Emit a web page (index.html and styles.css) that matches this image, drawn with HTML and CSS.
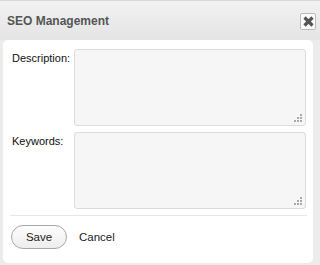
FILE: index.html
```html
<!DOCTYPE html>
<html lang="en">
<head>
  <meta charset="UTF-8">
  <title>SEO Management</title>
  <link rel="stylesheet" href="styles.css">
</head>
<body>
  <div class="dialog">
    <div class="dialog-header">
      <h2>SEO Management</h2>
      <button class="close" title="Close">
        <svg width="11" height="11" viewBox="0 0 11 11">
          <path d="M1.5 1.5 L9.5 9.5 M9.5 1.5 L1.5 9.5" stroke="#555" stroke-width="3.2"/>
        </svg>
      </button>
    </div>
    <div class="dialog-body">
      <div class="field">
        <label for="desc">Description:</label>
        <div class="input-wrap">
          <textarea id="desc"></textarea>
          <span class="grip"></span>
        </div>
      </div>
      <div class="field">
        <label for="keys">Keywords:</label>
        <div class="input-wrap">
          <textarea id="keys"></textarea>
          <span class="grip"></span>
        </div>
      </div>
      <div class="actions">
        <button class="save">Save</button>
        <a href="#" class="cancel">Cancel</a>
      </div>
    </div>
  </div>
</body>
</html>
```

FILE: styles.css
```css
body {
  margin: 0;
  background: #ececec;
  font-family: "Liberation Sans", Arial, sans-serif;
  font-size: 12px;
  color: #222;
}

.dialog {
  width: 320px;
  height: 265px;
  display: flex;
  flex-direction: column;
}

.dialog-header {
  height: 40px;
  display: flex;
  align-items: center;
  justify-content: space-between;
  padding: 0 4px 0 7px;
  background: linear-gradient(#f2f2f2, #e4e4e4);
  border-top: 1px solid #d8d8d8;
  box-sizing: border-box;
}

.dialog-header h2 {
  margin: 0;
  font-size: 12px;
  font-weight: bold;
  color: #555;
}

.close {
  width: 16px;
  height: 17px;
  padding: 0;
  margin-top: 1px;
  display: flex;
  align-items: center;
  justify-content: center;
  background: #fafafa;
  border: 1px solid #bbb;
  border-radius: 2px;
  cursor: pointer;
}

.dialog-body {
  flex: 1;
  margin: 0 7px 2px 3px;
  background: #fff;
  border-radius: 5px;
  padding: 9px 7px 0 9px;
}

.field {
  display: flex;
  margin-bottom: 6px;
}

.field label {
  width: 62px;
  padding-top: 3px;
  font-size: 11px;
  color: #111;
}

.input-wrap {
  position: relative;
  width: 232px;
  height: 77px;
}

.input-wrap textarea {
  display: block;
  width: 100%;
  height: 100%;
  box-sizing: border-box;
  background: #f6f6f6;
  border: 1px solid #dcdcdc;
  border-radius: 3px;
  resize: none;
  padding: 2px;
}

.grip {
  position: absolute;
  right: 4px;
  bottom: 4px;
  width: 8px;
  height: 8px;
  background:
    linear-gradient(#aaa, #aaa) 6px 0 / 2px 2px no-repeat,
    linear-gradient(#aaa, #aaa) 6px 3px / 2px 2px no-repeat,
    linear-gradient(#aaa, #aaa) 3px 3px / 2px 2px no-repeat,
    linear-gradient(#aaa, #aaa) 0 6px / 2px 2px no-repeat,
    linear-gradient(#aaa, #aaa) 3px 6px / 2px 2px no-repeat,
    linear-gradient(#aaa, #aaa) 6px 6px / 2px 2px no-repeat;
}

.actions {
  border-top: 1px solid #e6e6e6;
  margin: 3px -1px 0 -2px;
  padding-top: 9px;
  display: flex;
  align-items: center;
  gap: 12px;
}

.save {
  width: 56px;
  height: 24px;
  background: linear-gradient(#fdfdfd, #ededed);
  border: 1px solid #a8a8a8;
  border-radius: 12px;
  font-family: "Liberation Sans", Arial, sans-serif;
  font-size: 11.5px;
  color: #222;
  cursor: pointer;
  margin-left: 1px;
}

.cancel {
  font-size: 11.5px;
  color: #222;
  text-decoration: none;
}
```
